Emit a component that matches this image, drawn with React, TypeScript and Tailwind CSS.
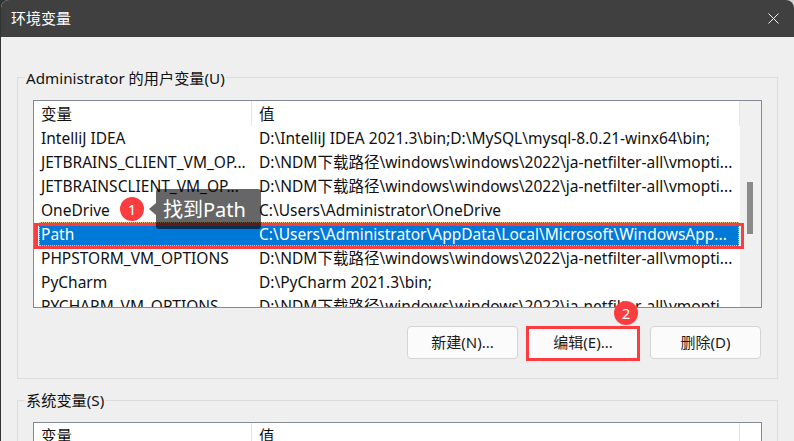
const rows = [
  { name: 'IntelliJ IDEA', value: 'D:\\IntelliJ IDEA 2021.3\\bin;D:\\MySQL\\mysql-8.0.21-winx64\\bin;' },
  { name: 'JETBRAINS_CLIENT_VM_OP...', value: 'D:\\NDM下载路径\\windows\\windows\\2022\\ja-netfilter-all\\vmopti...' },
  { name: 'JETBRAINSCLIENT_VM_OP...', value: 'D:\\NDM下载路径\\windows\\windows\\2022\\ja-netfilter-all\\vmopti...' },
  { name: 'OneDrive', value: 'C:\\Users\\Administrator\\OneDrive' },
  { name: 'Path', value: 'C:\\Users\\Administrator\\AppData\\Local\\Microsoft\\WindowsApp...', selected: true },
  { name: 'PHPSTORM_VM_OPTIONS', value: 'D:\\NDM下载路径\\windows\\windows\\2022\\ja-netfilter-all\\vmopti...' },
  { name: 'PyCharm', value: 'D:\\PyCharm 2021.3\\bin;' },
  { name: 'PYCHARM_VM_OPTIONS', value: 'D:\\NDM下载路径\\windows\\windows\\2022\\ja-netfilter-all\\vmopti...' },
];

function ListHeader() {
  return (
    <div className="flex h-[25px] shrink-0 items-center">
      <div className="h-full w-[218px] border-r border-[#e5e5e5] pl-[7px] leading-[27px]">变量</div>
      <div className="h-full w-[488px] border-r border-[#e5e5e5] pl-[7px] leading-[27px]">值</div>
    </div>
  );
}

function Badge({ n }: { n: number }) {
  return (
    <div className="flex h-6 w-6 items-center justify-center rounded-full bg-[#fb3d3f] text-[15px] text-white">{n}</div>
  );
}

function Button({ label, className }: { label: string; className?: string }) {
  return (
    <button className={`h-[33px] rounded-[4px] border border-[#d4d4d4] bg-[#fbfbfb] text-[15px] text-[#1a1a1a] ${className}`}>{label}</button>
  );
}

export default function App() {
  return (
    <div className="relative h-[441px] w-[794px] overflow-hidden bg-[linear-gradient(90deg,#333333_50%,#d4d4d4_50%)] pl-px text-[15.5px] text-[#111111] [font-family:'Noto_Sans','Noto_Sans_CJK_SC',sans-serif]">
      <div className="h-full w-[793px] overflow-hidden rounded-t-lg bg-[#efefef]">
        <div className="flex h-[37px] items-center justify-between bg-[#404040] pl-[10px] pr-[15px] text-[15px] text-white">
          <span>环境变量</span>
          <svg width="11" height="11" viewBox="0 0 11 11" stroke="#f2f2f2" strokeWidth="1">
            <path d="M0.5 0.5l10 10M10.5 0.5l-10 10" />
          </svg>
        </div>

        <div className="pl-4 pr-[16px] pt-[40px]">
          <div className="relative h-[302px] border border-[#dcdcdc] pl-[15px] pt-[22px]">
            <div className="absolute -top-[11px] left-[7px] bg-[#efefef] px-px text-[15.2px] leading-[22px]">Administrator 的用户变量(U)</div>
            <div className="flex h-[208px] w-[729px] overflow-hidden border border-[#858b96] bg-white">
              <div className="flex w-[706px] min-w-0 shrink-0 flex-col">
                <ListHeader />
                {rows.map((r) =>
                  <div key={r.name} className={`flex h-6 shrink-0 items-center whitespace-nowrap ${r.selected ? 'ml-[5px] w-[700px] bg-[#0078d7] text-white outline-1 -outline-offset-1 outline-dotted outline-[#e8c78c]' : ''}`}>
                    <div className={r.selected ? 'w-[213px] pl-[2px] pt-px' : 'w-[218px] pl-[7px] pt-px'}>{r.name}</div>
                    <div className="pl-[7px] pt-px">{r.value}</div>
                  </div>
                )}
              </div>
              <div className="w-[21px] shrink-0 bg-[#f0f0f0] pl-[7px] pt-[81px]">
                <div className="h-[52px] w-[6px] bg-[#8a8a8a]" />
              </div>
            </div>
            <div className="mt-[18px] flex justify-end gap-[9px] pr-[16px]">
              <Button label="新建(N)..." className="w-[111px]" />
              <Button label="编辑(E)..." className="w-[112px]" />
              <Button label="删除(D)" className="ml-[2px] w-[111px]" />
            </div>
          </div>

          <div className="relative mt-[21px] h-[60px] border border-b-0 border-[#dcdcdc] pl-[15px] pt-[21px]">
            <div className="absolute -top-[12px] left-[7px] bg-[#efefef] px-px text-[15.2px] leading-[22px]">系统变量(S)</div>
            <div className="flex h-[40px] w-[729px] border border-[#858b96] bg-white">
              <ListHeader />
            </div>
          </div>
        </div>
      </div>

      {/* annotations */}
      <div className="absolute left-[34px] top-[223px] h-[26px] w-[710px] border-[3px] border-l-4 border-[#fb3d3f]" />
      <div className="absolute left-[526px] top-[326px] h-[35px] w-[114px] border-[3px] border-[#fb3d3f]" />
      <div className="absolute left-[120px] top-[189px] flex h-[40px] items-center">
        <Badge n={1} />
        <div className="ml-[5px] h-0 w-0 border-y-[6px] border-r-[7px] border-y-transparent border-r-[#666666]" />
        <div className="h-[40px] w-[105px] rounded-[3px] bg-black/60 pl-[7px] text-[20px] leading-[41px] text-white">找到Path</div>
      </div>
      <div className="absolute left-[614px] top-[301px]"><Badge n={2} /></div>
    </div>
  );
}
